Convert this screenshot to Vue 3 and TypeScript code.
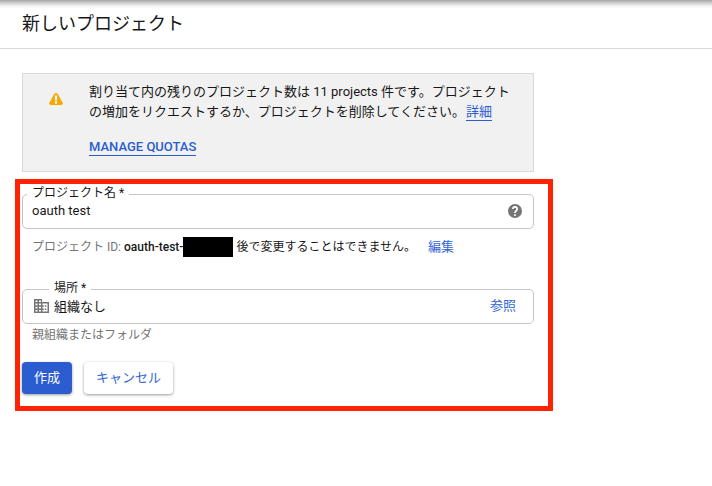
<script setup lang="ts">
import { ref } from 'vue'

const projectName = ref('oauth test')
const location = ref('組織なし')
</script>

<template>
  <div class="page">
    <header class="page-header">
      <h1>新しいプロジェクト</h1>
    </header>

    <main>
      <section class="notice">
        <svg class="warning" viewBox="0 0 14 12" aria-hidden="true">
          <path d="M5.2 1Q7-1 8.8 1L13.6 9.4Q14.4 12 12 12H2Q-.4 12 .4 9.4Z" fill="#f4a90b" />
          <path d="M6 2.5h2v5H6zM6 8.5h2v2H6z" fill="#fff" />
        </svg>
        <div class="notice-body">
          <p>
            割り当て内の残りのプロジェクト数は 11 projects 件です。プロジェクトの増加をリクエストするか、プロジェクトを削除してください。<a class="details" href="#">詳細</a>
          </p>
          <a class="quotas" href="#">MANAGE QUOTAS</a>
        </div>
      </section>

      <form class="framed" @submit.prevent>
        <div class="field">
          <label for="project-name">プロジェクト名 *</label>
          <input id="project-name" v-model="projectName" type="text" />
          <button class="icon-button" type="button" aria-label="ヘルプ">
            <svg viewBox="2 2 20 20" aria-hidden="true">
              <circle cx="12" cy="12" r="10" fill="#757575" />
              <path
                fill="none"
                stroke="#fff"
                stroke-width="2.4"
                d="M9 9.2a3 3 0 0 1 6 0c0 2.6-3 2.8-3 5.8M12 16.8v2.4"
              />
            </svg>
          </button>
        </div>
        <div class="project-id">
          <span class="muted">プロジェクト ID:</span>
          <strong>oauth-test-</strong>
          <span class="redacted"></span>
          <span class="note">後で変更することはできません。</span>
          <button class="text-button" type="button">編集</button>
        </div>

        <div class="field with-icon">
          <svg class="building" viewBox="0 0 15 14" aria-hidden="true">
            <path fill="#757575" d="M0 0h8v3h7v11H0z" />
            <path
              fill="#fff"
              d="M1.5 1.4h2V3h-2zM5 1.4h2V3H5zM1.5 4.6h2v1.6h-2zM5 4.6h2v1.6H5zM1.5 7.8h2v1.6h-2zM5 7.8h2v1.6H5zM1.5 11h2v1.6h-2zM5 11h2v1.6H5zM8.4 4.5h5.1v8H8.4V11h1.4V9.4H8.4V7.8h1.4V6.2H8.4z"
            />
            <path fill="#757575" d="M10.8 6.2h1.5v1.6h-1.5zM10.8 9.4h1.5V11h-1.5z" />
          </svg>
          <label for="location">場所 *</label>
          <input id="location" v-model="location" type="text" />
          <button class="text-button browse" type="button">参照</button>
        </div>
        <p class="hint">親組織またはフォルダ</p>

        <div class="actions">
          <button class="action primary" type="submit">作成</button>
          <button class="action" type="button">キャンセル</button>
        </div>
      </form>
    </main>
  </div>
</template>

<style>
body {
  background: #fff;
}
</style>

<style scoped>
.page,
.page * {
  box-sizing: border-box;
}
.page {
  font-family: Roboto, "Noto Sans CJK JP", sans-serif;
  font-size: 13px;
  line-height: 20px;
  color: #171717;
}
.page button,
.page input {
  font: inherit;
  border: 0;
  padding: 0;
  background: none;
}
.page-header {
  height: 49px;
  padding: 12px 22px 0;
  border-bottom: 1px solid #dadada;
  background: linear-gradient(#a6a6a6, #cfcfcf 3px, #f4f4f4 6px, #fff 9px) no-repeat;
}
h1 {
  margin: 0;
  font-size: 18px;
  line-height: 24px;
  font-weight: 400;
}
main {
  padding: 24px 15px;
}
.notice {
  display: flex;
  max-width: 512px;
  min-height: 99px;
  margin: 0 7px;
  padding: 8px 20px 0 26px;
  border: 1px solid #dadada;
  background: #f1f1f1;
}
.warning {
  flex: none;
  width: 14px;
  height: 12px;
  margin: 11px 26px 0 0;
}
.notice p {
  margin: 0 0 15px;
}
.notice a {
  display: inline-block;
  line-height: 16px;
  color: #2b5dd1;
  text-decoration: none;
  border-bottom: 1px solid #2b5dd1;
}
.notice .details {
  margin-left: 1px;
}
.notice .quotas {
  font-weight: 500;
}
.framed {
  max-width: 538px;
  margin-top: 7px;
  padding: 10px 14px 12px 2px;
  border: 5px solid #ff2204;
}
.field {
  position: relative;
  display: flex;
  align-items: center;
  height: 35px;
  padding: 0 11px 2px 9px;
  border: 1px solid #c6c6c6;
  border-radius: 5px;
}
.field label {
  position: absolute;
  top: -10px;
  left: 4px;
  padding: 0 5px;
  font-size: 12px;
  line-height: 16px;
  background: #fff;
}
.field.with-icon label {
  left: 26px;
}
.field input {
  flex: 1;
  min-width: 0;
  height: 24px;
  color: #171717;
  outline: 0;
}
.icon-button {
  width: 14px;
  height: 14px;
}
.icon-button svg {
  display: block;
}
.building {
  width: 15px;
  height: 14px;
  margin: 0 5px 0 2px;
}
.browse {
  margin-right: 6px;
}
.project-id {
  display: flex;
  align-items: center;
  height: 20px;
  margin: 8px 0 32px;
  padding-left: 10px;
  font-size: 12px;
  white-space: nowrap;
}
.project-id strong {
  margin-left: 3px;
  font-weight: 500;
}
.muted,
.hint {
  color: #757575;
}
.redacted {
  width: 50px;
  height: 20px;
  background: #000;
}
.note {
  margin: 0 12px 0 3px;
}
.page .text-button {
  font-size: 13px;
  color: #3367d6;
}
.hint {
  margin: 0;
  padding: 1px 0 17px 10px;
  font-size: 12px;
}
.actions {
  display: flex;
  gap: 12px;
}
.page .action {
  height: 32px;
  padding: 0 12px;
  border-radius: 4px;
  color: #3367d6;
  background: #fff;
  box-shadow: 0 1px 3px rgba(0, 0, 0, 0.4);
}
.page .primary {
  color: #fff;
  background: #2b5dd1;
}
</style>
